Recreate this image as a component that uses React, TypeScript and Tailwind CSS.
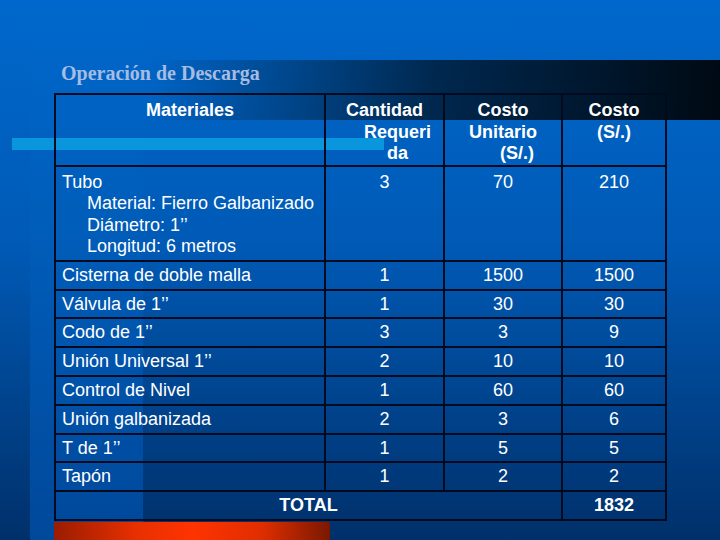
import React from "react";

const rows = [
  { name: "Cisterna de doble malla", qty: "1", unit: "1500", cost: "1500", h: "h-[29px]" },
  { name: "Válvula de 1’’", qty: "1", unit: "30", cost: "30", h: "h-[28px]" },
  { name: "Codo de 1’’", qty: "3", unit: "3", cost: "9", h: "h-[29px]" },
  { name: "Unión Universal 1’’", qty: "2", unit: "10", cost: "10", h: "h-[29px]" },
  { name: "Control de Nivel", qty: "1", unit: "60", cost: "60", h: "h-[29px]" },
  { name: "Unión galbanizada", qty: "2", unit: "3", cost: "6", h: "h-[29px]" },
  { name: "T de 1’’", qty: "1", unit: "5", cost: "5", h: "h-[28px]" },
  { name: "Tapón", qty: "1", unit: "2", cost: "2", h: "h-[29px]" },
];

const cell = "border-2 border-[#020a20] p-0";

export default function App() {
  return (
    <div className="relative w-[720px] h-[540px] overflow-hidden bg-[linear-gradient(to_bottom,#0068cc_0%,#005ab6_45%,#00306a_100%)] font-['Liberation_Sans',Arial,sans-serif] text-white">
      {/* background decoration */}
      <div className="absolute left-[30px] top-0 w-[113px] h-full bg-[linear-gradient(to_bottom,#0068cc_0%,#005cb8_45%,#00489a_100%)]" />
      <div className="absolute left-[150px] top-[60px] w-[570px] h-[60px] bg-[linear-gradient(to_right,rgba(0,0,0,0)_0%,rgba(0,0,0,0.6)_50%,rgba(0,0,0,0.9)_100%)]" />
      <div className="absolute left-[12px] top-[138px] w-[372px] h-[12px] bg-[#0a96dc]" />
      <div className="absolute left-[54px] top-[522px] w-[276px] h-[18px] bg-[linear-gradient(to_right,#9a1c00_0%,#e83000_30%,#ff3300_50%,#e02e00_75%,#7a1800_100%)]" />

      <div className="relative pt-[63px]">
        <h1 className="pl-[61px] font-['Liberation_Serif','Times_New_Roman',serif] font-bold text-[20px] leading-none text-[#a6bce2]">
          Operación de Descarga
        </h1>

        <table className="mt-[10px] ml-[54px] w-[611px] table-fixed border-collapse text-[18px]">
          <colgroup>
            <col className="w-[270px]" />
            <col className="w-[119px]" />
            <col className="w-[118px]" />
            <col className="w-[104px]" />
          </colgroup>
          <thead>
            <tr className="h-[72px] font-bold leading-[21.5px]">
              <th className={`${cell} align-top pt-[5px] font-bold`}>Materiales</th>
              <th className={`${cell} align-top pt-[5px] font-bold`}>
                <div>Cantidad</div>
                <div className="pl-[26px]">Requeri</div>
                <div className="pl-[26px]">da</div>
              </th>
              <th className={`${cell} align-top pt-[5px] font-bold`}>
                <div>Costo</div>
                <div>Unitario</div>
                <div className="pl-[28px]">(S/.)</div>
              </th>
              <th className={`${cell} align-top pt-[5px] font-bold`}>
                <div>Costo</div>
                <div>(S/.)</div>
              </th>
            </tr>
          </thead>
          <tbody>
            <tr className="h-[95px] leading-[21.4px]">
              <td className={`${cell} align-top pt-[5px] pl-[6px]`}>
                <div>Tubo</div>
                <div className="pl-[25px]">Material: Fierro Galbanizado</div>
                <div className="pl-[25px]">Diámetro: 1’’</div>
                <div className="pl-[25px]">Longitud: 6 metros</div>
              </td>
              <td className={`${cell} align-top pt-[5px] text-center`}>3</td>
              <td className={`${cell} align-top pt-[5px] text-center`}>70</td>
              <td className={`${cell} align-top pt-[5px] text-center`}>210</td>
            </tr>
            {rows.map((r) => (
              <tr key={r.name} className={`${r.h} leading-[21px]`}>
                <td className={`${cell} align-middle pl-[6px]`}>{r.name}</td>
                <td className={`${cell} align-middle text-center`}>{r.qty}</td>
                <td className={`${cell} align-middle text-center`}>{r.unit}</td>
                <td className={`${cell} align-middle text-center`}>{r.cost}</td>
              </tr>
            ))}
            <tr className="h-[29px] leading-[21px] font-bold">
              <td colSpan={3} className={`${cell} align-middle text-center`}>TOTAL</td>
              <td className={`${cell} align-middle text-center`}>1832</td>
            </tr>
          </tbody>
        </table>
      </div>
    </div>
  );
}
